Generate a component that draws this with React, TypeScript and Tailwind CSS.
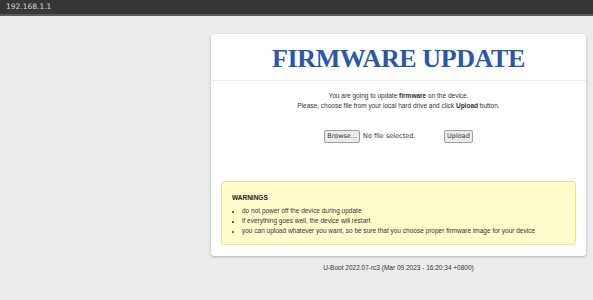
export default function App() {
  return (
    <div className="min-h-[300px] w-[593px] bg-[#ececec] font-['Liberation_Sans',Arial,sans-serif] text-[#333]">
      {/* address bar */}
      <div className="h-[16px] bg-[#363636] border-b-2 border-[#5a5a5a] flex items-center pl-[6px]">
        <span className="text-[7.5px] text-[#d8d8d8] font-['DejaVu_Sans',sans-serif]">192.168.1.1</span>
      </div>

      <div className="pl-[211px] pt-[18px]">
        <div className="w-[375px] bg-white rounded-[3px] shadow-[0_1px_3px_rgba(0,0,0,0.25)]">
          <div className="h-[47px] flex items-center justify-center border-b border-[#ececec]">
            <h1 className="font-['Liberation_Serif',serif] font-bold text-[#2a55b0] text-[26px] tracking-[-0.4px] pt-[2px]">
              FIRMWARE UPDATE
            </h1>
          </div>

          <div className="pt-[10px] text-center text-[6.5px] leading-[10px]">
            <p>You are going to update <b>firmware</b> on the device.</p>
            <p>Please, choose file from your local hard drive and click <b>Upload</b> button.</p>
          </div>

          <div className="mt-[19px] flex justify-center items-center font-['DejaVu_Sans',sans-serif] text-[6.5px] text-[#333]">
            <button className="h-[13px] px-[2px] bg-[#ebebeb] border border-[#a0a0a0] rounded-[2px]">Browse...</button>
            <span className="ml-[3px] w-[81px]">No file selected.</span>
            <button className="h-[13px] px-[2px] bg-[#ebebeb] border border-[#a0a0a0] rounded-[2px]">Upload</button>
          </div>

          <div className="px-[10px] pt-[38px] pb-[11px]">
            <div className="bg-[#fffdcc] border border-[#f3e08a] rounded-[3px] pl-[10px] pt-[11px] pb-[8px] text-[6.5px] leading-[10px]">
              <p className="font-bold text-[#222] mb-[3px]">WARNINGS</p>
              <ul className="list-disc pl-[10px] marker:text-[6px]">
                <li>do not power off the device during update</li>
                <li>if everything goes well, the device will restart</li>
                <li>you can upload whatever you want, so be sure that you choose proper firmware image for your device</li>
              </ul>
            </div>
          </div>
        </div>

        <p className="w-[375px] text-center text-[6.5px] mt-[7px] text-[#333]">
          U-Boot 2022.07-rc3 (Mar 09 2023 - 16:20:34 +0800)
        </p>
      </div>
    </div>
  )
}
